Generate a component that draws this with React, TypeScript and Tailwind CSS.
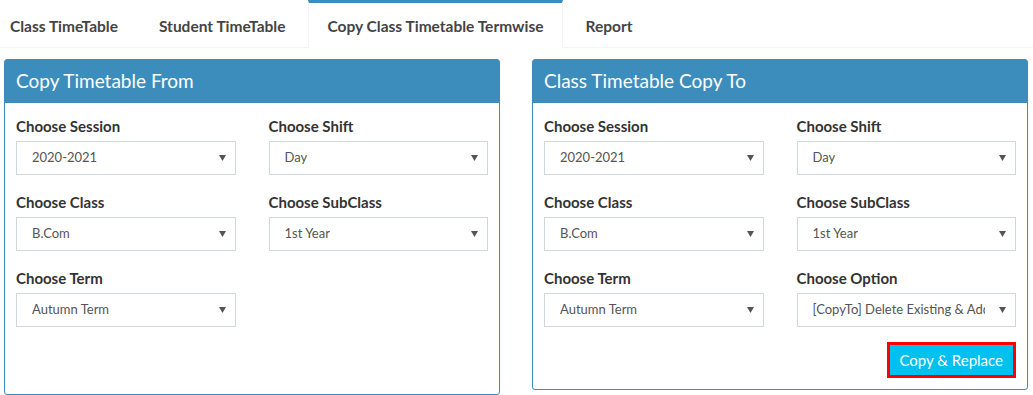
import type { ReactNode } from 'react'

const TABS = ['Class TimeTable', 'Student TimeTable', 'Copy Class Timetable Termwise', 'Report']
const ACTIVE = 2

function Select({ value }: { value: string }) {
  return (
    <div className="relative flex h-[34px] items-center overflow-hidden border border-[#d2d6de] bg-white pl-[15px] pr-[30px] text-[13px] text-[#555]">
      <span className="overflow-hidden whitespace-nowrap">{value}</span>
      <svg className="absolute right-[9px] top-[13px]" width="7" height="6" viewBox="0 0 7 6">
        <path d="M0 0h7L3.5 6z" fill="#555" />
      </svg>
    </div>
  )
}

function Field({ label, value }: { label: string; value: string }) {
  return (
    <div className="mb-[17px]">
      <div className="mb-[5px] h-[20px] text-[15px] font-bold leading-[20px] text-[#333]">{label}</div>
      <Select value={value} />
    </div>
  )
}

function Panel({ title, className, children }: { title: string; className: string; children: ReactNode }) {
  return (
    <div className={`flex w-[496px] flex-col rounded-[3px] border border-[#3c8dbc] bg-white ${className}`}>
      <div className="flex h-[43px] items-center bg-[#3c8dbc] pl-[11px] text-[19px] text-white">{title}</div>
      <div className="pl-[11px] pr-[11px] pt-[13px]">{children}</div>
    </div>
  )
}

export default function App() {
  return (
    <div className="h-[395px] w-[1033px] bg-white font-['Lato',sans-serif]">
      {/* Tabs */}
      <div className="flex h-[48px] border-b border-[#f4f4f4]">
        {TABS.map((t, i) => (
          <div
            key={t}
            className={
              i === ACTIVE
                ? 'mr-[5px] -mb-px flex items-center border-x border-t-[3px] border-x-[#f4f4f4] border-t-[#3c8dbc] bg-white px-[18px] pt-[3px] text-[15.5px] font-bold text-[#444]'
                : `mr-[5px] flex items-center px-[18px] pt-[7px] text-[15.5px] font-bold text-[#444] ${i === 0 ? 'pl-[10px]' : ''}`
            }
          >
            {t}
          </div>
        ))}
      </div>

      <div className="mt-[11px] flex gap-[32px] pl-[4px]">
        <Panel title="Copy Timetable From" className="h-[336px]">
          <div className="grid grid-cols-2 gap-x-[33px]">
            <Field label="Choose Session" value="2020-2021" />
            <Field label="Choose Shift" value="Day" />
            <Field label="Choose Class" value="B.Com" />
            <Field label="Choose SubClass" value="1st Year" />
            <Field label="Choose Term" value="Autumn Term" />
          </div>
        </Panel>

        <Panel title="Class Timetable Copy To" className="h-[331px]">
          <div className="grid grid-cols-2 gap-x-[33px]">
            <Field label="Choose Session" value="2020-2021" />
            <Field label="Choose Shift" value="Day" />
            <Field label="Choose Class" value="B.Com" />
            <Field label="Choose SubClass" value="1st Year" />
            <Field label="Choose Term" value="Autumn Term" />
            <Field label="Choose Option" value="[CopyTo] Delete Existing & Add New" />
          </div>
          <div className="-mt-[2px] flex justify-end">
            <button className="h-[36px] border-[3px] border-[#ff0000] bg-[#00c0ef] px-[10px] text-[15px] text-white">
              Copy &amp; Replace
            </button>
          </div>
        </Panel>
      </div>
    </div>
  )
}
